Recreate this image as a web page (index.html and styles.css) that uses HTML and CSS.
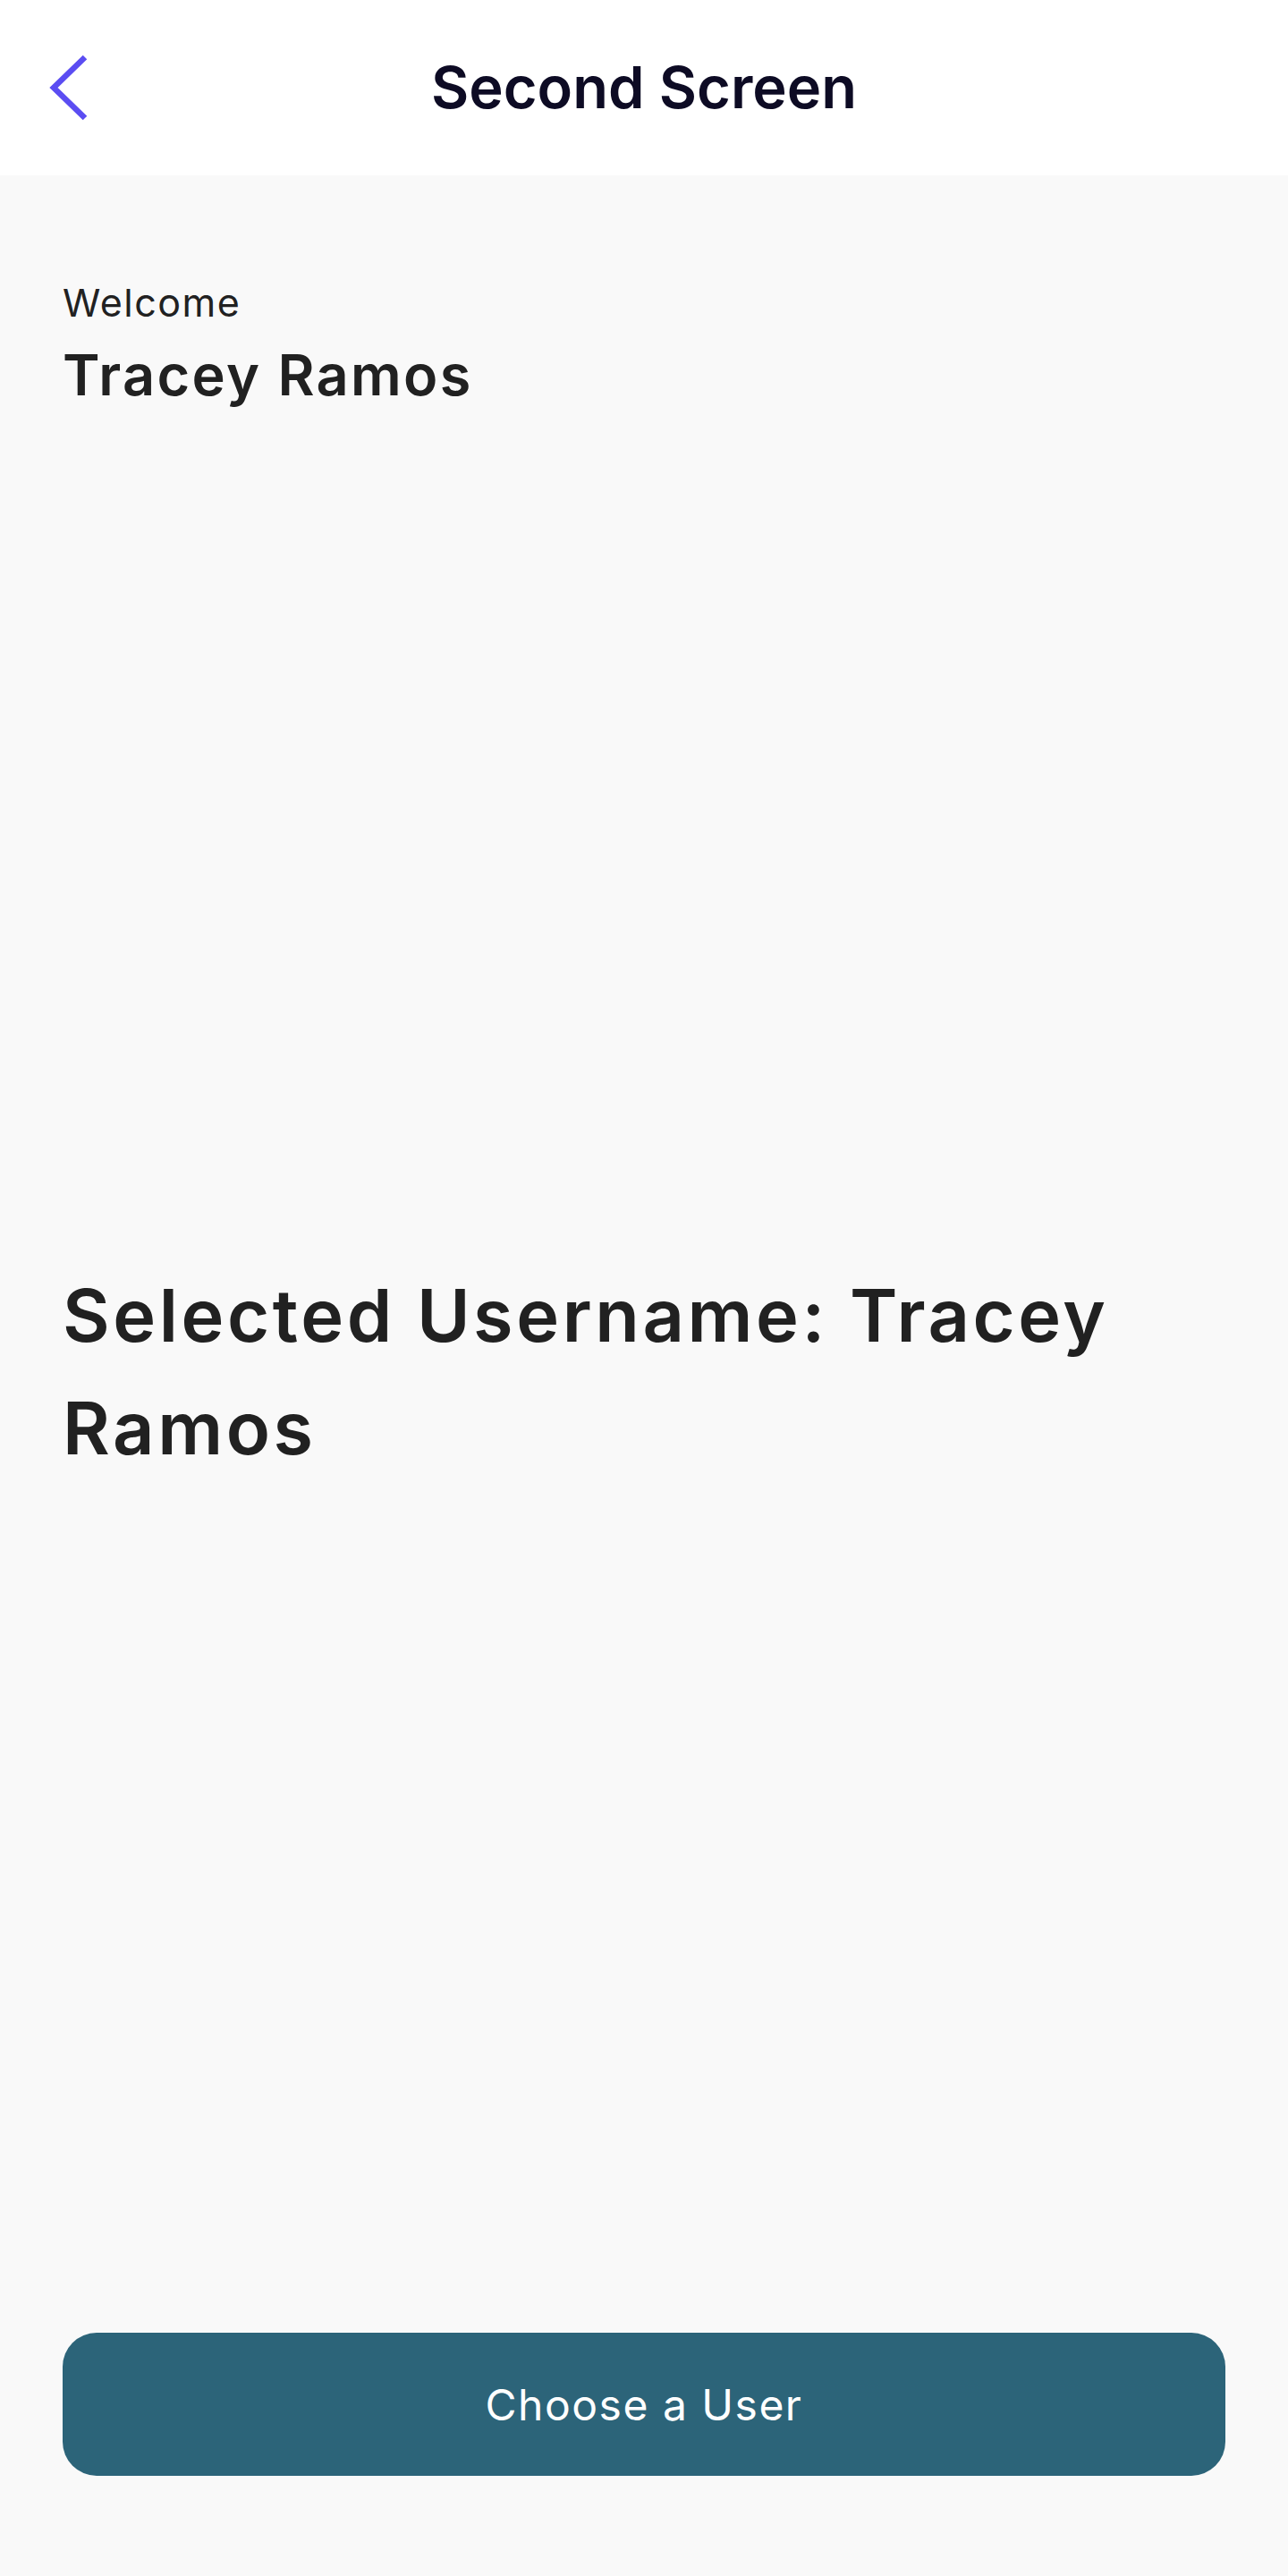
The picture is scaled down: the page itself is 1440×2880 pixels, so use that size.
FILE: index.html
```html
<!DOCTYPE html>
<html lang="en">
<head>
<meta charset="utf-8">
<title>Second Screen</title>
<link rel="stylesheet" href="styles.css">
</head>
<body>
<div class="screen">
  <header class="appbar">
    <button class="back" aria-label="Back">
      <svg width="48" height="80" viewBox="0 0 48 80" fill="none">
        <path d="M43 6 L8 40 L43 74" stroke="#5B4DF2" stroke-width="6.5" stroke-linecap="butt" stroke-linejoin="miter"/>
      </svg>
    </button>
    <h1 class="appbar-title">Second Screen</h1>
  </header>
  <main class="content">
    <section class="welcome">
      <p class="welcome-label">Welcome</p>
      <p class="welcome-name">Tracey Ramos</p>
    </section>
    <section class="selected">
      <h2 class="selected-text">Selected Username: Tracey Ramos</h2>
    </section>
    <button class="choose">Choose a User</button>
  </main>
</div>
</body>
</html>
```

FILE: styles.css
```css
* { box-sizing: border-box; }
html, body { margin: 0; padding: 0; }
body {
  background: #f9f9f9;
  font-family: Inter, "Noto Sans", sans-serif;
  color: #212121;
}
.screen {
  height: 2880px;
  display: flex;
  flex-direction: column;
}
.appbar {
  height: 196px;
  background: #ffffff;
  display: flex;
  align-items: center;
  justify-content: center;
  position: relative;
  flex: none;
}
.back {
  position: absolute;
  left: 52px;
  top: 58px;
  width: 48px;
  height: 80px;
  padding: 0;
  border: 0;
  background: none;
}
.back svg { display: block; }
.appbar-title {
  margin: 0;
  font-size: 65px;
  line-height: 80px;
  font-weight: 600;
  color: #0d0b24;
}
.content {
  flex: 1;
  display: flex;
  flex-direction: column;
  padding: 112px 70px 112px;
}
.welcome p { margin: 0; }
.welcome-label {
  font-size: 43px;
  line-height: 60px;
  font-weight: 400;
  letter-spacing: 1.5px;
  margin-bottom: 11px !important;
}
.welcome-name {
  font-size: 63px;
  line-height: 80px;
  font-weight: 600;
  letter-spacing: 2.3px;
}
.selected {
  flex: 1;
  display: flex;
  align-items: center;
}
.selected-text {
  margin: 0;
  font-size: 81px;
  line-height: 126px;
  font-weight: 600;
  letter-spacing: 3.6px;
}
.choose {
  height: 160px;
  width: 100%;
  border: 0;
  border-radius: 38px;
  background: #2c6479;
  color: #ffffff;
  font-family: Inter, "Noto Sans", sans-serif;
  font-size: 48px;
  font-weight: 400;
  letter-spacing: 1.5px;
  flex: none;
}
```
